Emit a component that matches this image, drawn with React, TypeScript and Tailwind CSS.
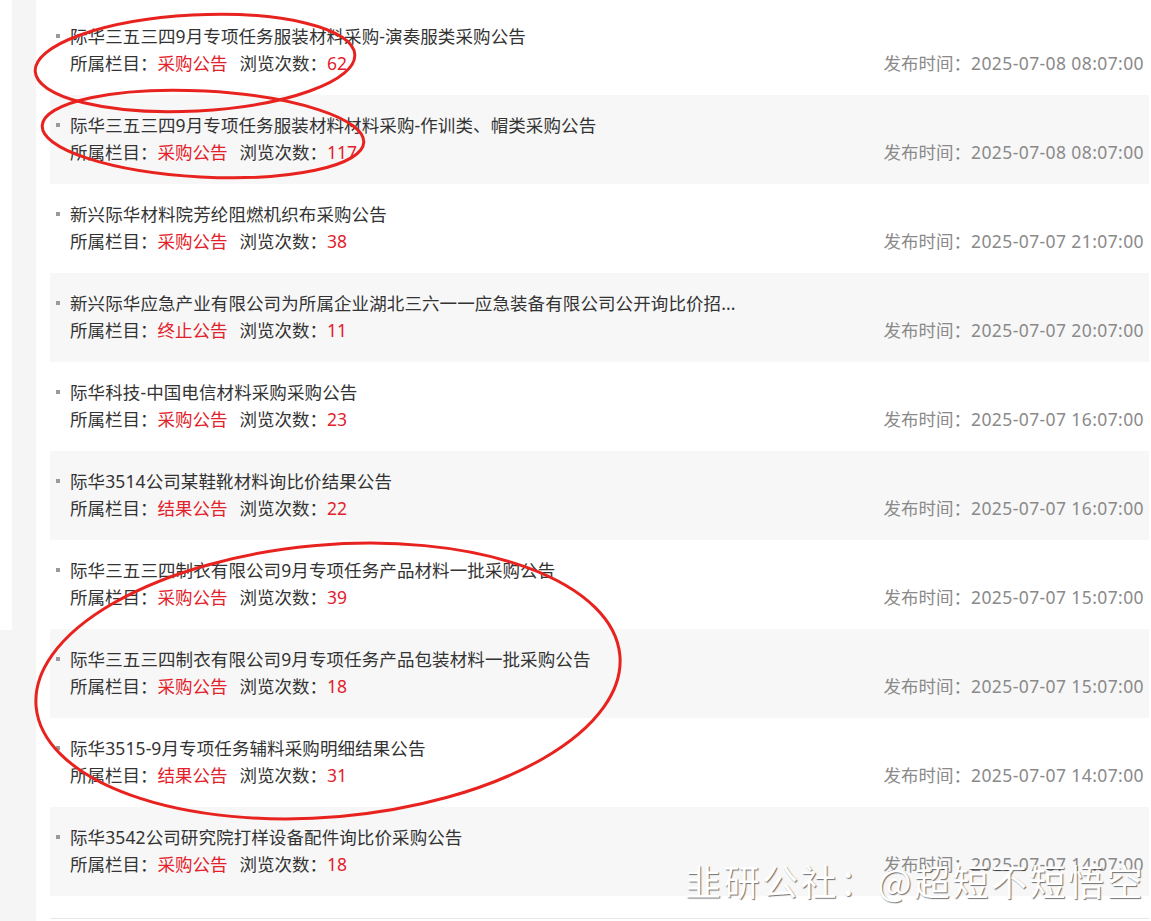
import React from "react";

type Item = { title: string; cat: string; views: string; time: string };

const items: Item[] = [
  { title: "际华三五三四9月专项任务服装材料采购-演奏服类采购公告", cat: "采购公告", views: "62", time: "2025-07-08 08:07:00" },
  { title: "际华三五三四9月专项任务服装材料材料采购-作训类、帽类采购公告", cat: "采购公告", views: "117", time: "2025-07-08 08:07:00" },
  { title: "新兴际华材料院芳纶阻燃机织布采购公告", cat: "采购公告", views: "38", time: "2025-07-07 21:07:00" },
  { title: "新兴际华应急产业有限公司为所属企业湖北三六一一应急装备有限公司公开询比价招...", cat: "终止公告", views: "11", time: "2025-07-07 20:07:00" },
  { title: "际华科技-中国电信材料采购采购公告", cat: "采购公告", views: "23", time: "2025-07-07 16:07:00" },
  { title: "际华3514公司某鞋靴材料询比价结果公告", cat: "结果公告", views: "22", time: "2025-07-07 16:07:00" },
  { title: "际华三五三四制衣有限公司9月专项任务产品材料一批采购公告", cat: "采购公告", views: "39", time: "2025-07-07 15:07:00" },
  { title: "际华三五三四制衣有限公司9月专项任务产品包装材料一批采购公告", cat: "采购公告", views: "18", time: "2025-07-07 15:07:00" },
  { title: "际华3515-9月专项任务辅料采购明细结果公告", cat: "结果公告", views: "31", time: "2025-07-07 14:07:00" },
  { title: "际华3542公司研究院打样设备配件询比价采购公告", cat: "采购公告", views: "18", time: "2025-07-07 14:07:00" },
];

export default function App() {
  return (
    <div
      className="relative w-[1151px] h-[921px] overflow-hidden bg-[#f5f5f5] flex items-start"
      style={{ fontFamily: '"Noto Sans", "Noto Sans CJK SC", sans-serif' }}
    >
      <div className="w-[12px] h-[630px] bg-white shrink-0" />
      <div className="w-[24px] shrink-0" />
      <div className="flex-1 h-[921px] bg-white pl-[14px] pr-[2px] pt-[6px]">
        <ul className="flex flex-col">
          {items.map((it, i) => (
            <li
              key={i}
              className={`h-[89px] pl-[20px] pr-[5px] pt-[17px] pb-[18px] text-[17.5px] leading-[27px] relative ${
                i % 2 === 1 ? "bg-[#f7f7f7]" : "bg-white"
              }`}
            >
              <span className="absolute left-[6px] top-[28px] w-[4px] h-[4px] bg-[#9a9a9a]" />
              <div className="text-[#333333] whitespace-nowrap tracking-[0.1px]">{it.title}</div>
              <div className="flex justify-between whitespace-nowrap">
                <div className="text-[#333333]">
                  所属栏目：<span className="text-[#e3212b]">{it.cat}</span>
                  <span className="ml-[12px]">浏览次数：</span>
                  <span className="text-[#e3212b]">{it.views}</span>
                </div>
                <div className="text-[#8a8a8a]">
                  发布时间：<span className="tracking-[0.4px]">{it.time}</span>
                </div>
              </div>
            </li>
          ))}
        </ul>
        <div className="mt-[22px] border-t border-[#e6e6e6]" />
      </div>

      <svg className="absolute left-0 top-0 pointer-events-none" width="1151" height="921" viewBox="0 0 1151 921">
        <ellipse cx="195" cy="63" rx="160" ry="48" transform="rotate(-3 195 63)" fill="none" stroke="#e8231f" strokeWidth="3" />
        <ellipse cx="203" cy="134" rx="161" ry="43" transform="rotate(3 203 134)" fill="none" stroke="#e8231f" strokeWidth="3" />
        <ellipse cx="328" cy="681" rx="293" ry="136" transform="rotate(-5 328 681)" fill="none" stroke="#e8231f" strokeWidth="3" />
      </svg>

      <div
        className="absolute left-[685px] top-[862px] text-[36px] leading-none text-white whitespace-nowrap tracking-[2.5px] [text-shadow:1px_1px_1px_rgba(0,0,0,0.55)]"
        style={{ fontFamily: '"Noto Sans CJK SC", sans-serif' }}
      >
        韭研公社：@超短不短悟空
      </div>
    </div>
  );
}
